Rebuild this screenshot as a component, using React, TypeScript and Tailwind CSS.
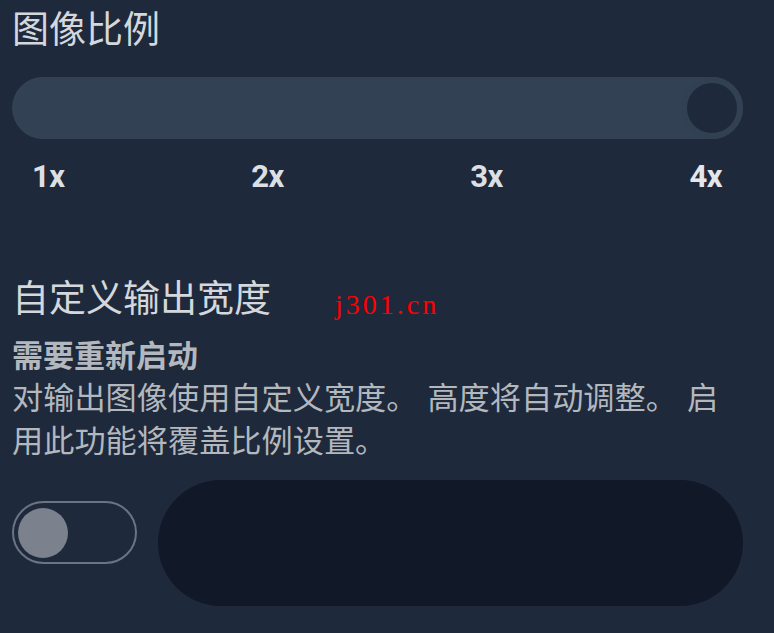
import { useState } from "react";

const scaleLabels = ["1x", "2x", "3x", "4x"];

export default function App() {
  const [scale] = useState(4);
  const [customWidth, setCustomWidth] = useState(false);
  const [width, setWidth] = useState("");

  return (
    <div className="relative min-h-[633px] bg-[#1e293b] pl-3 pr-[31px] pt-[3px] font-['Noto_Sans_CJK_SC',sans-serif]">
      <h2 className="text-[37px] leading-[48px] text-[#d4d7dc]">图像比例</h2>

      <div className="mt-[26px] flex h-[62px] items-center justify-end rounded-full bg-[#334155]">
        <div className="h-[62px] w-[62px] rounded-full border-[6px] border-[#324054] bg-[#1e293b]" />
      </div>
      <div className="mt-[20px] flex justify-between pl-[20px] pr-[21px] font-['Roboto',sans-serif] text-[31px] font-bold leading-[36px] tracking-[-0.5px] text-[#dcdfe4]">
        {scaleLabels.map((label, index) => (
          <span key={label} className={index + 1 === scale ? "text-[#e4e6ea]" : ""}>
            {label}
          </span>
        ))}
      </div>

      <h2 className="mt-[77px] text-[37px] leading-[48px] text-[#d4d7dc]">自定义输出宽度</h2>
      <p className="mt-[14px] text-[31px] font-bold leading-[40px] text-[#b3b7be]">需要重新启动</p>
      <p className="text-[31.2px] leading-[43px] text-[#b3b7be] [word-spacing:3px]">
        对输出图像使用自定义宽度。 高度将自动调整。 启<br />
        用此功能将覆盖比例设置。
      </p>

      <div className="mt-[20px] flex items-start gap-[21px]">
        <button
          type="button"
          onClick={() => setCustomWidth(!customWidth)}
          className={`mt-[21px] flex h-[63px] w-[125px] shrink-0 items-center rounded-full border-2 border-[#6b7483] px-[4px] ${customWidth ? "justify-end" : "justify-start"}`}
        >
          <span className="h-[50px] w-[50px] rounded-full bg-[#7b818d]" />
        </button>
        <input
          value={width}
          onChange={(event) => setWidth(event.target.value)}
          disabled={!customWidth}
          className="h-[126px] flex-1 rounded-full bg-[#111827] px-8 text-[30px] text-gray-300 outline-none"
        />
      </div>

      <span className="absolute left-[335px] top-[289px] font-['Liberation_Serif',serif] text-[28px] leading-[32px] tracking-[3px] text-[#ff0000]">
        j301.cn
      </span>
    </div>
  );
}
